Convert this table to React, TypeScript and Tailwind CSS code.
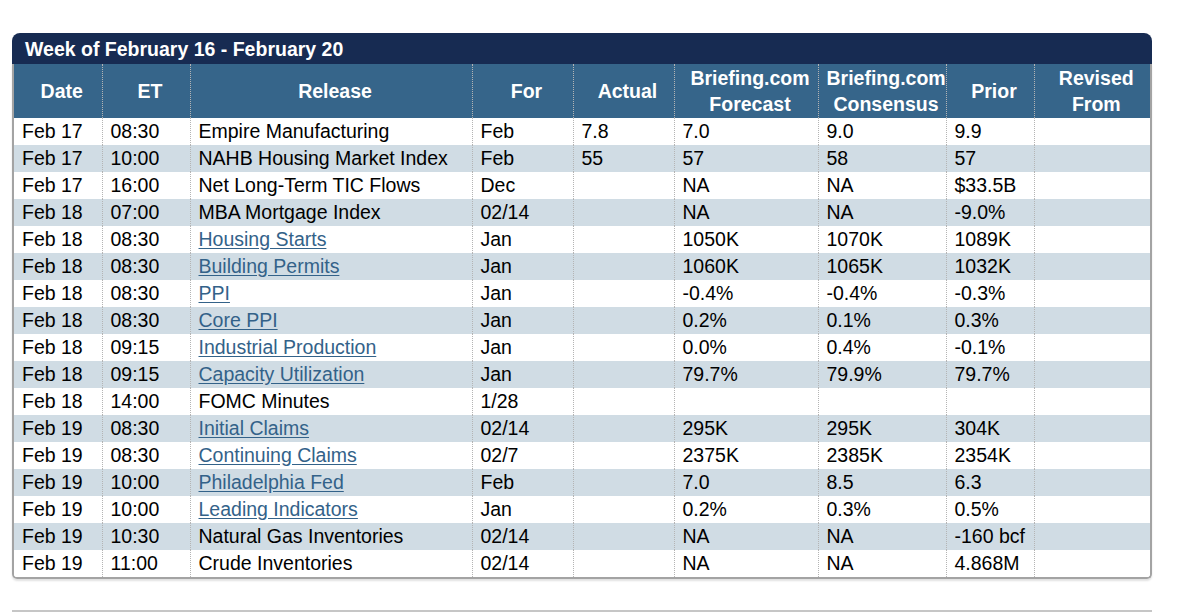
const columns = [
  { key: 'date', label: ['Date'], w: 'w-[88px]' },
  { key: 'et', label: ['ET'], w: 'w-[88px]' },
  { key: 'release', label: ['Release'], w: 'w-[282px]' },
  { key: 'for', label: ['For'], w: 'w-[101px]' },
  { key: 'actual', label: ['Actual'], w: 'w-[101px]' },
  { key: 'forecast', label: ['Briefing.com', 'Forecast'], w: 'w-[144px]' },
  { key: 'consensus', label: ['Briefing.com', 'Consensus'], w: 'w-[128px]' },
  { key: 'prior', label: ['Prior'], w: 'w-[88px]' },
  { key: 'revised', label: ['Revised', 'From'], w: 'w-[116px]' },
];

type Row = {
  date: string;
  et: string;
  release: string;
  link?: boolean;
  period: string;
  actual: string;
  forecast: string;
  consensus: string;
  prior: string;
  revised: string;
};

const rows: Row[] = [
  { date: 'Feb 17', et: '08:30', release: 'Empire Manufacturing', period: 'Feb', actual: '7.8', forecast: '7.0', consensus: '9.0', prior: '9.9', revised: '' },
  { date: 'Feb 17', et: '10:00', release: 'NAHB Housing Market Index', period: 'Feb', actual: '55', forecast: '57', consensus: '58', prior: '57', revised: '' },
  { date: 'Feb 17', et: '16:00', release: 'Net Long-Term TIC Flows', period: 'Dec', actual: '', forecast: 'NA', consensus: 'NA', prior: '$33.5B', revised: '' },
  { date: 'Feb 18', et: '07:00', release: 'MBA Mortgage Index', period: '02/14', actual: '', forecast: 'NA', consensus: 'NA', prior: '-9.0%', revised: '' },
  { date: 'Feb 18', et: '08:30', release: 'Housing Starts', link: true, period: 'Jan', actual: '', forecast: '1050K', consensus: '1070K', prior: '1089K', revised: '' },
  { date: 'Feb 18', et: '08:30', release: 'Building Permits', link: true, period: 'Jan', actual: '', forecast: '1060K', consensus: '1065K', prior: '1032K', revised: '' },
  { date: 'Feb 18', et: '08:30', release: 'PPI', link: true, period: 'Jan', actual: '', forecast: '-0.4%', consensus: '-0.4%', prior: '-0.3%', revised: '' },
  { date: 'Feb 18', et: '08:30', release: 'Core PPI', link: true, period: 'Jan', actual: '', forecast: '0.2%', consensus: '0.1%', prior: '0.3%', revised: '' },
  { date: 'Feb 18', et: '09:15', release: 'Industrial Production', link: true, period: 'Jan', actual: '', forecast: '0.0%', consensus: '0.4%', prior: '-0.1%', revised: '' },
  { date: 'Feb 18', et: '09:15', release: 'Capacity Utilization', link: true, period: 'Jan', actual: '', forecast: '79.7%', consensus: '79.9%', prior: '79.7%', revised: '' },
  { date: 'Feb 18', et: '14:00', release: 'FOMC Minutes', period: '1/28', actual: '', forecast: '', consensus: '', prior: '', revised: '' },
  { date: 'Feb 19', et: '08:30', release: 'Initial Claims', link: true, period: '02/14', actual: '', forecast: '295K', consensus: '295K', prior: '304K', revised: '' },
  { date: 'Feb 19', et: '08:30', release: 'Continuing Claims', link: true, period: '02/7', actual: '', forecast: '2375K', consensus: '2385K', prior: '2354K', revised: '' },
  { date: 'Feb 19', et: '10:00', release: 'Philadelphia Fed', link: true, period: 'Feb', actual: '', forecast: '7.0', consensus: '8.5', prior: '6.3', revised: '' },
  { date: 'Feb 19', et: '10:00', release: 'Leading Indicators', link: true, period: 'Jan', actual: '', forecast: '0.2%', consensus: '0.3%', prior: '0.5%', revised: '' },
  { date: 'Feb 19', et: '10:30', release: 'Natural Gas Inventories', period: '02/14', actual: '', forecast: 'NA', consensus: 'NA', prior: '-160 bcf', revised: '' },
  { date: 'Feb 19', et: '11:00', release: 'Crude Inventories', period: '02/14', actual: '', forecast: 'NA', consensus: 'NA', prior: '4.868M', revised: '' },
];

const sep = 'border-r border-dotted border-[#b4b4b4]';

export default function App() {
  return (
    <div className="bg-white min-h-[612px] pt-[33px] pl-[12px] font-['Liberation_Sans',Arial,sans-serif]">
      <div className="w-[1140px]">
        {/* title bar */}
        <div className="h-[31px] bg-[#172b52] rounded-t-[8px] pl-[13px] pt-[3px] flex items-center text-white text-[19.5px] font-bold">
          Week of February 16 - February 20
        </div>

        {/* table */}
        <div className="border-x-2 border-b-2 border-[#a3a3a3] rounded-b-[5px] shadow-[0_2px_2px_rgba(0,0,0,0.12)] overflow-hidden">
          <table className="w-[1136px] table-fixed border-collapse text-[19.5px]">
            <thead>
              <tr className="bg-[#36658a] h-[54px]">
                {columns.map((c, i) => (
                  <th
                    key={c.key}
                    className={`${c.w} p-0 pl-2 text-center align-middle font-bold text-white leading-[26px] whitespace-nowrap ${i < columns.length - 1 ? sep : ''}`}
                  >
                    {c.label.map((l) => (
                      <div key={l}>{l}</div>
                    ))}
                  </th>
                ))}
              </tr>
            </thead>
            <tbody>
              {rows.map((r, idx) => {
                const cells = [r.date, r.et, r.release, r.period, r.actual, r.forecast, r.consensus, r.prior, r.revised];
                return (
                  <tr key={idx} className={`h-[27px] ${idx % 2 === 1 ? 'bg-[#d0dce4]' : 'bg-white'}`}>
                    {cells.map((v, i) => (
                      <td
                        key={i}
                        className={`p-0 pl-2 text-left align-middle text-black leading-[27px] whitespace-nowrap ${i < cells.length - 1 ? sep : ''}`}
                      >
                        {i === 2 && r.link ? (
                          <a href="#" className="text-[#336289] underline underline-offset-[2px]">
                            {v}
                          </a>
                        ) : (
                          v
                        )}
                      </td>
                    ))}
                  </tr>
                );
              })}
            </tbody>
          </table>
        </div>

        <div className="mt-[31px] h-[3px] bg-[#c6c6c6]" />
      </div>
    </div>
  );
}
